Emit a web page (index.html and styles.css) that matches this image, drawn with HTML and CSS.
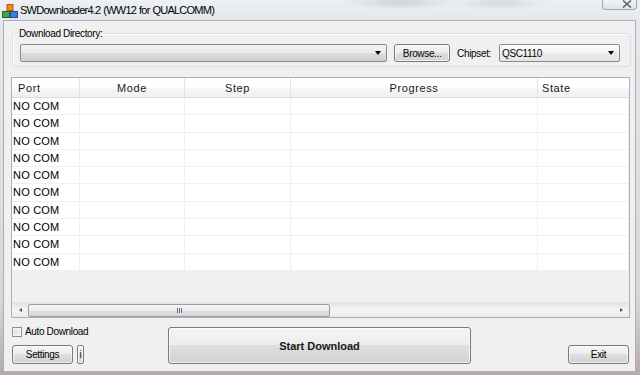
FILE: index.html
```html
<!DOCTYPE html>
<html lang="en">

<head>
    <meta charset="UTF-8">
    <title>SWDownloader4.2 (WW12 for QUALCOMM)</title>
    <link rel="stylesheet" href="styles.css">
</head>

<body>
    <div class="frame">
        <div class="titlebar">
            <svg class="app-icon" width="16" height="14" viewBox="0 0 16 14">
                <rect x="5" y="0.5" width="6" height="6" fill="#f08a24" stroke="#b85a10" stroke-width="1" />
                <rect x="0.5" y="7.5" width="7" height="6" fill="#3aa648" stroke="#1f6e2a" stroke-width="1" />
                <rect x="8.5" y="7.5" width="7" height="6" fill="#3b7fd6" stroke="#1d4f96" stroke-width="1" />
            </svg>
            <span class="title">SWDownloader4.2 (WW12 for QUALCOMM)</span>
            <div class="close-btn">
                <svg width="10" height="8" viewBox="0 0 10 8">
                    <path d="M1 0.5 L9 7.5 M9 0.5 L1 7.5" stroke="#5c6470" stroke-width="1.6" />
                </svg>
            </div>
        </div>

        <div class="client">
            <!-- Download directory group -->
            <div class="group">
                <span class="group-label">Download Directory:</span>
                <div class="combo dir-combo"><span class="arrow"></span></div>
                <button class="btn browse-btn">Browse...</button>
                <span class="chip-label">Chipset:</span>
                <div class="combo chip-combo"><span class="combo-text">QSC1110</span><span class="arrow"></span></div>
            </div>

            <!-- Port list -->
            <div class="listview">
                <div class="lv-header">
                    <div class="hcell left">Port</div>
                    <div class="hcell">Mode</div>
                    <div class="hcell">Step</div>
                    <div class="hcell">Progress</div>
                    <div class="hcell left state">State</div>
                </div>
                <div class="lv-row"><div>NO COM</div><div></div><div></div><div></div><div></div></div>
                <div class="lv-row"><div>NO COM</div><div></div><div></div><div></div><div></div></div>
                <div class="lv-row"><div>NO COM</div><div></div><div></div><div></div><div></div></div>
                <div class="lv-row"><div>NO COM</div><div></div><div></div><div></div><div></div></div>
                <div class="lv-row"><div>NO COM</div><div></div><div></div><div></div><div></div></div>
                <div class="lv-row"><div>NO COM</div><div></div><div></div><div></div><div></div></div>
                <div class="lv-row"><div>NO COM</div><div></div><div></div><div></div><div></div></div>
                <div class="lv-row"><div>NO COM</div><div></div><div></div><div></div><div></div></div>
                <div class="lv-row"><div>NO COM</div><div></div><div></div><div></div><div></div></div>
                <div class="lv-row"><div>NO COM</div><div></div><div></div><div></div><div></div></div>
                <div class="lv-empty"></div>
                <div class="hscroll">
                    <span class="sb-arrow sb-left"></span>
                    <div class="sb-thumb"><span class="grip"></span></div>
                    <div class="sb-track"></div>
                    <span class="sb-arrow sb-right"></span>
                </div>
            </div>

            <!-- Bottom controls -->
            <div class="bottom">
                <div class="bottom-left">
                    <label class="check"><span class="box"></span>Auto Download</label>
                    <div class="settings-row">
                        <button class="btn settings-btn">Settings</button>
                        <div class="btn info-btn">i</div>
                    </div>
                </div>
                <button class="btn start-btn">Start Download</button>
                <button class="btn exit-btn">Exit</button>
            </div>
        </div>
    </div>
</body>

</html>
```

FILE: styles.css
```css
body {
    margin: 0;
    width: 640px;
    height: 375px;
    overflow: hidden;
    font-family: "Liberation Sans", Arial, sans-serif;
    background: #b9bec4;
}

.frame {
    display: flex;
    flex-direction: column;
    height: 375px;
    box-sizing: border-box;
    padding: 0 4px 3px 3px;
    background: linear-gradient(to bottom, #e6e9ed, #d4d8dc 80%, #b8a8a4);
}

.titlebar {
    position: relative;
    height: 20px;
    display: flex;
    align-items: center;
    margin-left: -3px;
    margin-right: -4px;
    padding-left: 2px;
    background:
        radial-gradient(ellipse 60px 8px at 400px 2px, rgba(120, 130, 145, 0.25), transparent),
        radial-gradient(ellipse 50px 7px at 500px 3px, rgba(120, 130, 145, 0.2), transparent),
        linear-gradient(to bottom, #eef0f3, #e4e8ec);
}

.app-icon {
    margin-top: 1px;
}

.title {
    margin-left: 2px;
    font-size: 11px;
    color: #000;
    letter-spacing: -0.75px;
    word-spacing: 0.5px;
}

.close-btn {
    position: absolute;
    top: -1px;
    right: 3px;
    width: 35px;
    height: 11px;
    box-sizing: border-box;
    border: 1px solid #a3a9b1;
    border-top: none;
    border-radius: 0 0 4px 4px;
    background: linear-gradient(to bottom, #f4f5f7, #dfe3e8);
    display: flex;
    justify-content: flex-end;
    align-items: center;
    padding-right: 4px;
}

.client {
    flex: 1;
    display: flex;
    flex-direction: column;
    border: 1px solid #a9aeb4;
    background: #f0f0f0;
    font-size: 10px;
    letter-spacing: -0.35px;
    color: #000;
}

/* group box */
.group {
    position: relative;
    display: flex;
    align-items: center;
    gap: 7px;
    margin: 12px 4px 0 8px;
    padding: 10px 10px 4px 7px;
    border: 1px solid #d9e0e6;
    border-radius: 3px;
    box-shadow: inset 1px 1px 0 #fff;
}

.group-label {
    position: absolute;
    top: -6px;
    left: 5px;
    padding: 0 1px;
    background: #f0f0f0;
    line-height: 11px;
}

.combo {
    position: relative;
    height: 18px;
    box-sizing: border-box;
    border: 1px solid #8a8a8a;
    border-radius: 2px;
    background: linear-gradient(to bottom, #f2f2f2 0%, #ebebeb 50%, #dddddd 50%, #d0d0d0 100%);
}

.dir-combo {
    flex: 1;
}

.chip-combo {
    width: 121px;
    margin-left: 1px;
    background: linear-gradient(to bottom, #fcfcfc 0%, #f4f4f4 50%, #ececec 50%, #e4e4e4 100%);
    display: flex;
    align-items: center;
    padding-left: 2px;
}

.arrow {
    position: absolute;
    right: 5px;
    top: 6px;
    border-left: 3.5px solid transparent;
    border-right: 3.5px solid transparent;
    border-top: 4px solid #000;
}

.btn {
    box-sizing: border-box;
    border: 1px solid #7a7a7a;
    border-radius: 3px;
    background: linear-gradient(to bottom, #f4f4f4 0%, #ececec 50%, #dedede 50%, #d2d2d2 100%);
    font-family: inherit;
    font-size: 10px;
    letter-spacing: -0.35px;
    color: #000;
    padding: 0;
    box-shadow: inset 0 0 0 1px rgba(255, 255, 255, 0.7);
}

.browse-btn {
    width: 56px;
    height: 18px;
}

/* list view */
.listview {
    display: flex;
    flex-direction: column;
    height: 241px;
    box-sizing: border-box;
    margin: 10px 5px 0 7px;
    border: 1px solid #acb0b5;
    background: #f0f0f0;
    font-size: 11px;
    letter-spacing: 0;
}

.lv-header,
.lv-row {
    display: grid;
    grid-template-columns: 68px 105px 106px 247px 91px;
}

.lv-header {
    height: 19px;
    border-bottom: 1px solid #dadde1;
    background: linear-gradient(to bottom, #ffffff 0%, #ffffff 45%, #f4f5f7 60%, #eef0f2 100%);
}

.hcell {
    display: flex;
    align-items: center;
    justify-content: center;
    border-right: 1px solid #e3e5e8;
    color: #1b1b1b;
    letter-spacing: 0.6px;
    padding-top: 1px;
}

.hcell.left {
    justify-content: flex-start;
    padding-left: 6px;
}

.hcell.state {
    padding-left: 4px;
    border-right: none;
}

.lv-row {
    height: 17.3px;
    box-sizing: border-box;
    border-bottom: 1px solid #f0f0f0;
    background: #fff;
    line-height: 16px;
}

.lv-row div {
    border-right: 1px solid #f0f0f0;
    padding-left: 1px;
    color: #000;
    letter-spacing: 0.2px;
}

.lv-empty {
    flex: 1;
}

.hscroll {
    position: relative;
    display: flex;
    align-items: center;
    height: 14px;
    border-top: 1px solid #e2e2e2;
    background: linear-gradient(to bottom, #e4e4e4, #f2f2f2 40%, #f2f2f2 70%, #e8e8e8);
}

.sb-arrow {
    width: 16px;
    display: flex;
    justify-content: center;
}

.sb-left::before {
    content: '';
    border-top: 2.5px solid transparent;
    border-bottom: 2.5px solid transparent;
    border-right: 3px solid #555;
}

.sb-right::before {
    content: '';
    border-top: 2.5px solid transparent;
    border-bottom: 2.5px solid transparent;
    border-left: 3px solid #555;
}

.sb-thumb {
    width: 302px;
    height: 13px;
    box-sizing: border-box;
    border: 1px solid #9b9fa5;
    border-radius: 2px;
    background: linear-gradient(to bottom, #f6f6f6, #ececec 50%, #dedfe1 51%, #d4d6d9);
    display: flex;
    justify-content: center;
    align-items: center;
}

.grip {
    width: 5px;
    height: 5px;
    background: repeating-linear-gradient(to right, #6b6f75 0 1px, transparent 1px 2px);
}

.sb-track {
    flex: 1;
}

/* bottom area */
.bottom {
    flex: 1;
    display: flex;
    align-items: flex-end;
    padding: 0 6px 7px 8px;
}

.bottom-left {
    width: 156px;
    display: flex;
    flex-direction: column;
}

.check {
    display: flex;
    align-items: center;
    height: 11px;
    margin-bottom: 8px;
}

.box {
    width: 10px;
    height: 10px;
    box-sizing: border-box;
    margin-right: 3px;
    border: 1px solid #8e8f8f;
    background: linear-gradient(135deg, #dcdcdc, #f6f6f6);
    box-shadow: inset 0 0 0 1px #f4f4f4;
}

.settings-row {
    display: flex;
    gap: 4px;
}

.settings-btn {
    width: 61px;
    height: 19px;
}

.info-btn {
    width: 7px;
    height: 19px;
    border-radius: 2px;
    letter-spacing: 0;
    color: #111;
    display: flex;
    justify-content: center;
    align-items: center;
}

.start-btn {
    width: 303px;
    height: 37px;
    font-size: 11px;
    font-weight: bold;
    letter-spacing: 0;
    color: #1a1a1a;
}

.exit-btn {
    width: 61px;
    height: 19px;
    margin-left: auto;
}
```
